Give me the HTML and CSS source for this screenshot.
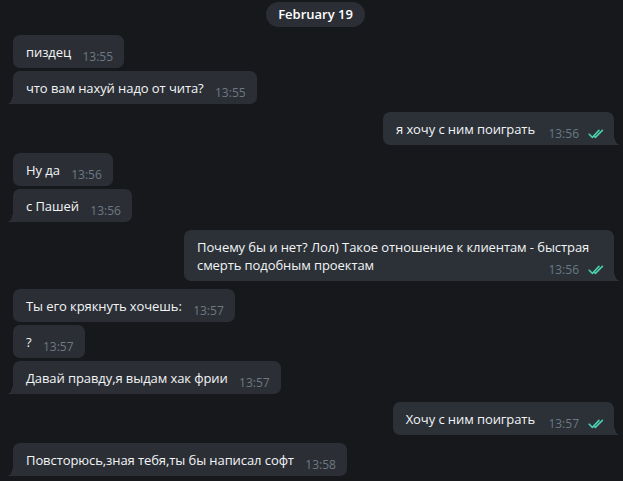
FILE: index.html
```html
<!DOCTYPE html>
<html lang="ru">
<head>
<meta charset="utf-8">
<title>Chat</title>
<link rel="stylesheet" href="styles.css">
</head>
<body>
<div class="chat">
  <div class="date">February 19</div>

  <div class="bubble in first"><span class="text">пиздец<i class="sp"></i></span><span class="meta"><span class="time">13:55</span></span></div>
  <div class="bubble in tail next"><span class="text">что вам нахуй надо от чита?<i class="sp"></i></span><span class="meta"><span class="time">13:55</span></span></div>

  <div class="bubble out tail group"><span class="text">я хочу с ним поиграть<i class="sp"></i></span><span class="meta"><span class="time">13:56</span><svg class="check" width="18" height="10" viewBox="0 0 18 10"><path d="M1.2 5.2 L4.4 8.4 L11 1.4 M6.6 7.6 L7.4 8.4 L14.4 1.4"/></svg></span></div>

  <div class="bubble in group"><span class="text">Ну да<i class="sp"></i></span><span class="meta"><span class="time">13:56</span></span></div>
  <div class="bubble in tail next"><span class="text">с Пашей<i class="sp"></i></span><span class="meta"><span class="time">13:56</span></span></div>

  <div class="bubble out tail group"><span class="text">Почему бы и нет? Лол) Такое отношение к клиентам - быстрая смерть подобным проектам<i class="sp"></i></span><span class="meta"><span class="time">13:56</span><svg class="check" width="18" height="10" viewBox="0 0 18 10"><path d="M1.2 5.2 L4.4 8.4 L11 1.4 M6.6 7.6 L7.4 8.4 L14.4 1.4"/></svg></span></div>

  <div class="bubble in group"><span class="text">Ты его крякнуть хочешь:<i class="sp"></i></span><span class="meta"><span class="time">13:57</span></span></div>
  <div class="bubble in next"><span class="text">?<i class="sp"></i></span><span class="meta"><span class="time">13:57</span></span></div>
  <div class="bubble in tail next"><span class="text">Давай правду,я выдам хак фрии<i class="sp"></i></span><span class="meta"><span class="time">13:57</span></span></div>

  <div class="bubble out tail group"><span class="text">Хочу с ним поиграть<i class="sp"></i></span><span class="meta"><span class="time">13:57</span><svg class="check" width="18" height="10" viewBox="0 0 18 10"><path d="M1.2 5.2 L4.4 8.4 L11 1.4 M6.6 7.6 L7.4 8.4 L14.4 1.4"/></svg></span></div>

  <div class="bubble in tail group"><span class="text">Повсторюсь,зная тебя,ты бы написал софт<i class="sp"></i></span><span class="meta"><span class="time">13:58</span></span></div>
</div>
</body>
</html>
```

FILE: styles.css
```css
html, body {
  margin: 0;
  padding: 0;
  background: #17181c;
}

body {
  font-family: "Open Sans", "Noto Sans", sans-serif;
  font-size: 13px;
  color: #f2f4f6;
  height: 481px;
  overflow: hidden;
}

.chat {
  display: flex;
  flex-direction: column;
  padding: 2px 9px 0 13px;
}

.date {
  align-self: center;
  background: #2b2f35;
  color: #ffffff;
  font-weight: 600;
  font-size: 13px;
  line-height: 25px;
  height: 25px;
  padding: 0 12px;
  border-radius: 13px;
  margin-left: 4px;
}

.bubble {
  position: relative;
  display: grid;
  max-width: 430px;
  background: #2b2f35;
  border-radius: 7px;
  padding: 8px 11px 7px 13px;
  line-height: 18px;
  box-sizing: border-box;
}

.bubble.in {
  align-self: flex-start;
}

.bubble.out {
  align-self: flex-end;
  background: #2b3136;
  padding-right: 8px;
}

.first { margin-top: 8px; }
.next { margin-top: 3px; }
.group { margin-top: 8px; }

.text,
.meta {
  grid-area: 1 / 1;
}

.text {
  white-space: normal;
  overflow-wrap: break-word;
  letter-spacing: -0.08px;
}

.sp {
  display: inline-block;
  width: 42px;
  height: 1px;
}

.out .sp {
  width: 71px;
}

.meta {
  justify-self: end;
  align-self: end;
  display: flex;
  align-items: center;
  font-size: 12px;
  line-height: 14px;
  margin-bottom: -3px;
  color: #6d7883;
}

.out .meta {
  color: #6a7985;
}

.check {
  margin-left: 9px;
  fill: none;
  stroke: #4ccdb1;
  stroke-width: 1.6;
  stroke-linecap: round;
  stroke-linejoin: round;
}

.tail.in {
  border-bottom-left-radius: 0;
}

.tail.out {
  border-bottom-right-radius: 0;
}

.tail::before {
  content: "";
  position: absolute;
  bottom: 0;
  width: 6px;
  height: 11px;
  background: inherit;
}

.tail.in::before {
  left: -6px;
  -webkit-mask: radial-gradient(ellipse 6px 11px at 0 0, transparent 97%, #000 100%);
  mask: radial-gradient(ellipse 6px 11px at 0 0, transparent 97%, #000 100%);
}

.tail.out::before {
  right: -6px;
  -webkit-mask: radial-gradient(ellipse 6px 11px at 100% 0, transparent 97%, #000 100%);
  mask: radial-gradient(ellipse 6px 11px at 100% 0, transparent 97%, #000 100%);
}
```
